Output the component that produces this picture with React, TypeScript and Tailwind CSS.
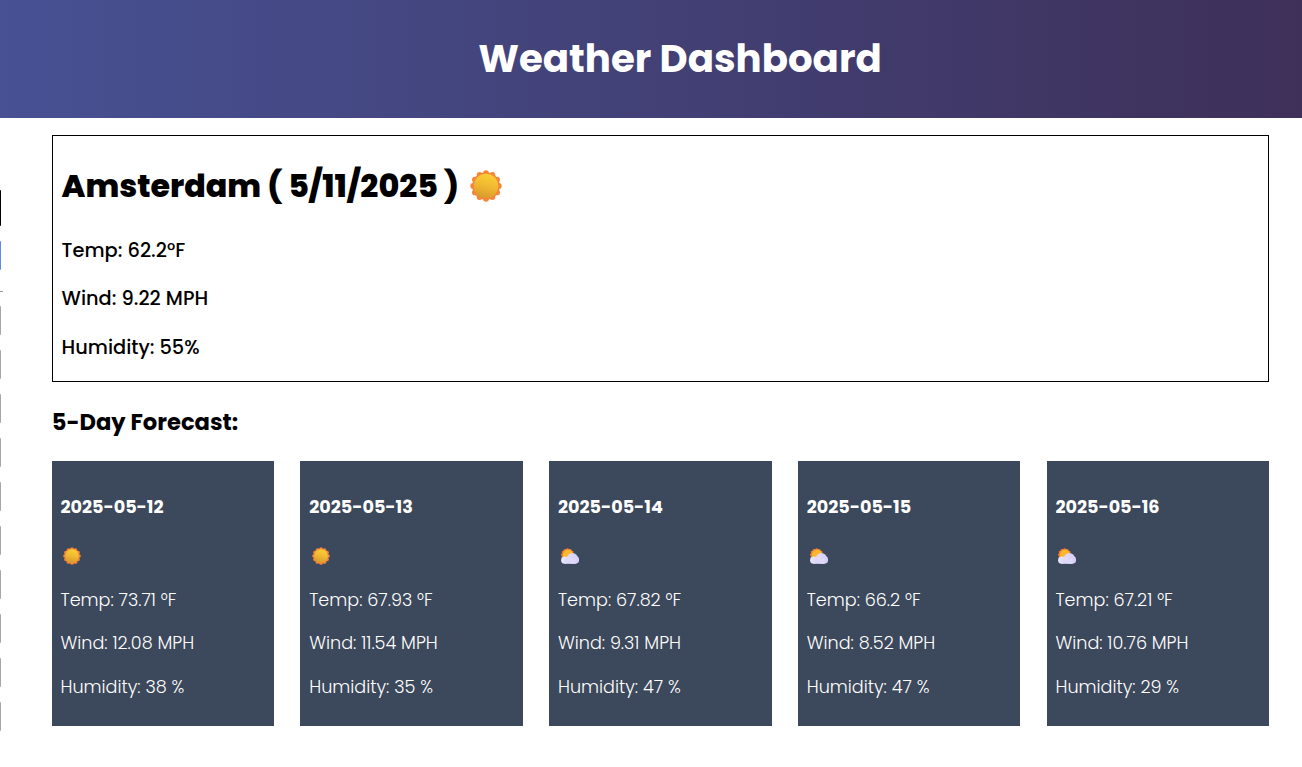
import React from "react";

type Icon = "sun" | "partly";

const days: { date: string; icon: Icon; temp: string; wind: string; humidity: string }[] = [
  { date: "2025-05-12", icon: "sun", temp: "73.71", wind: "12.08", humidity: "38" },
  { date: "2025-05-13", icon: "sun", temp: "67.93", wind: "11.54", humidity: "35" },
  { date: "2025-05-14", icon: "partly", temp: "67.82", wind: "9.31", humidity: "47" },
  { date: "2025-05-15", icon: "partly", temp: "66.2", wind: "8.52", humidity: "47" },
  { date: "2025-05-16", icon: "partly", temp: "67.21", wind: "10.76", humidity: "29" },
];

const cities = Array.from({ length: 10 }, (_, i) => i);
const petals = Array.from({ length: 12 }, (_, i) => (i * Math.PI) / 6);

function Sun({ className }: { className: string }) {
  return (
    <svg viewBox="0 0 32 32" className={className}>
      <defs>
        <linearGradient id="sunFace" x1="0.65" y1="0" x2="0.4" y2="1">
          <stop offset="0" stopColor="#fbd034" />
          <stop offset="0.5" stopColor="#f0b932" />
          <stop offset="1" stopColor="#d99a2b" />
        </linearGradient>
      </defs>
      <circle cx="16" cy="16" r="13.7" fill="#f58638" />
      {petals.map((a) => (
        <circle key={a} cx={16 + 12.8 * Math.cos(a)} cy={16 + 12.8 * Math.sin(a)} r="2.9" fill="#f58638" />
      ))}
      <circle cx="16" cy="16" r="12.2" fill="url(#sunFace)" />
    </svg>
  );
}

function PartlyCloudy({ className }: { className: string }) {
  return (
    <svg viewBox="0 0 18 16" className={className}>
      <defs>
        <linearGradient id="cloud" x1="1" y1="0" x2="0" y2="1">
          <stop offset="0" stopColor="#d5ccf5" />
          <stop offset="1" stopColor="#e6e3fc" />
        </linearGradient>
      </defs>
      <circle cx="6.6" cy="6.8" r="6" fill="#ee7d35" />
      {petals.map((a) => (
        <circle key={a} cx={6.6 + 5.4 * Math.cos(a)} cy={6.8 + 5.4 * Math.sin(a)} r="1.2" fill="#ee7d35" />
      ))}
      <circle cx="7" cy="6.8" r="5" fill="#fcb82b" />
      <circle cx="3.7" cy="12.2" r="3.6" fill="#e6e3fc" />
      <circle cx="11.4" cy="10.3" r="5.4" fill="url(#cloud)" />
      <circle cx="14.2" cy="11.8" r="3.9" fill="#d9d1f8" />
      <rect x="3.5" y="10.5" width="11" height="5.3" fill="#dfdafa" />
    </svg>
  );
}

export default function App() {
  return (
    <div className="h-[767px] w-full overflow-hidden bg-white font-['Poppins','Inter',sans-serif] text-black">
      <header className="flex h-[118px] items-center justify-center bg-linear-to-r/srgb from-[#475193] to-[#3e3059] pl-[58px]">
        <h1 className="text-[38.72px] leading-[60px] font-bold text-white">Weather Dashboard</h1>
      </header>
      <div className="flex">
        <aside className="w-[3px] shrink-0 pt-[72px]">
          <div className="h-[36px] w-px rounded-r-[1px] bg-black" />
          <div className="mt-[15px] h-[29px] w-px rounded-r-[1px] bg-[#5c8ded]" />
          <div className="mt-[21px] h-px w-[3px] bg-[#999999]" />
          <div className="mt-[14px] flex flex-col gap-[15px]">
            {cities.map((c) => (
              <div key={c} className="h-[29px] w-px rounded-r-[1px] bg-[#a6a6a6]" />
            ))}
          </div>
        </aside>
        <main className="min-w-0 flex-1 pt-[17px] pr-[33px] pl-[48.7px]">
          <section className="h-[247px] border border-black pl-[8.9px]">
            <div className="flex h-[100px] items-center">
              <h2 className="text-[31.68px] leading-[48px] font-extrabold whitespace-nowrap">Amsterdam ( 5/11/2025 )</h2>
              <Sun className="ml-[11.5px] size-8" />
            </div>
            <div className="flex flex-col pt-[3px] text-[19.36px] font-medium">
              <p className="h-[48px] leading-[24px]">Temp: 62.2°F</p>
              <p className="h-[49px] leading-[24px]">Wind: 9.22 MPH</p>
              <p className="leading-[24px]">Humidity: 55%</p>
            </div>
          </section>
          <h3 className="flex h-[79px] items-center pt-[3px] text-[22.65px] font-bold">5-Day Forecast:</h3>
          <section className="grid grid-cols-5 gap-[26.4px]">
            {days.map((d) => (
              <article key={d.date} className="h-[265px] bg-[#3c485b] pt-[33px] pl-[8.8px] text-[17.6px] leading-[26px] font-light text-white">
                <h4 className="text-[17.6px] font-bold">{d.date}</h4>
                <div className="flex h-[67px] items-center pt-[5px] pl-[3px]">
                  {d.icon === "sun" ? <Sun className="size-[18px]" /> : <PartlyCloudy className="h-[16px] w-[18px]" />}
                </div>
                <p className="h-[43px]">Temp: {d.temp} °F</p>
                <p className="h-[44px]">Wind: {d.wind} MPH</p>
                <p>Humidity: {d.humidity} %</p>
              </article>
            ))}
          </section>
        </main>
      </div>
    </div>
  );
}
